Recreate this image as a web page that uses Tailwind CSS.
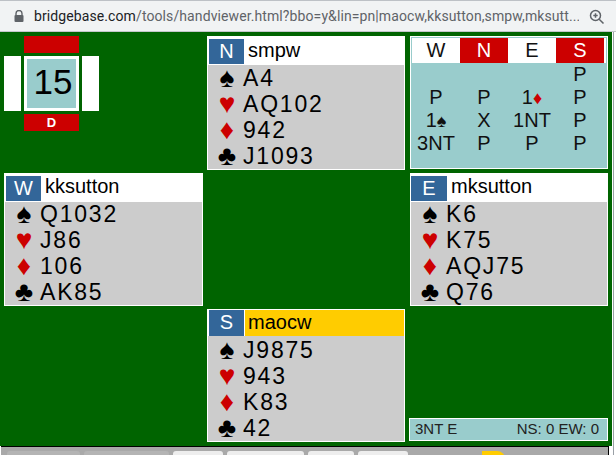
<!doctype html>
<html><head><meta charset="utf-8"><script src="https://cdn.jsdelivr.net/npm/@tailwindcss/browser@4"></script></head>
<body class="w-[616px] h-[455px] overflow-hidden bg-white font-['Liberation_Sans',sans-serif] text-black relative">
<div class="h-[32px] bg-[#f1f3f4] border-t border-b border-t-[#bdc1c6] border-b-[#c4c7cb] relative flex items-center pl-[14px] mt-0">
<svg width="10" height="12" viewBox="0 0 10 12" class="shrink-0"><path d="M2 5V3.5a3 3 0 0 1 6 0V5" fill="none" stroke="#5f6368" stroke-width="1.4"/><rect x="0.5" y="5" width="9" height="7" rx="1" fill="#5f6368"/></svg>
<div class="ml-[10px] w-[545px] whitespace-nowrap overflow-hidden text-[14px] leading-[18px] tracking-[0.1px] font-['Roboto',sans-serif] text-[#5f6368]"><span class="text-[#202124]">bridgebase.com</span>/tools/handviewer.html?bbo=y&amp;lin=pn|maocw,kksutton,smpw,mksutt...</div>
<svg width="16" height="16" viewBox="0 0 16 16" class="absolute left-[589px] top-[8px]"><circle cx="6.5" cy="6.5" r="5" fill="none" stroke="#5f6368" stroke-width="1.5"/><path d="M10.2 10.2 14.5 14.5M4.3 6.5h4.4M6.5 4.3v4.4" stroke="#5f6368" stroke-width="1.5" fill="none"/></svg>
</div>
<div class="h-[414px] w-[612px] bg-[#006400] pt-[4px] pl-[4px] grid grid-cols-[199px_198px_199px] grid-rows-[134px_133px_133px] gap-x-[4px] gap-y-[3px]">
<div class="relative">
 <div class="absolute left-[20px] top-0 w-[55px] h-[17px] bg-[#cc0000]"></div>
 <div class="absolute left-0 top-[20px] w-[17px] h-[55px] bg-white"></div>
 <div class="absolute left-[78px] top-[20px] w-[17px] h-[55px] bg-white"></div>
 <div class="absolute left-[20px] top-[20px] w-[55px] h-[55px] bg-[#99cccc] border-[3px] border-white flex items-center justify-center text-[35px] leading-none pb-[4px] pl-[3px]">15</div>
 <div class="absolute left-[20px] top-[78px] w-[55px] h-[17px] bg-[#cc0000] text-white font-bold text-[13px] leading-[17px] text-center">D</div>
</div>
<div class="flex flex-col border border-white bg-[#cccccc]"><div class="h-[28px] bg-white flex items-center pl-[1px] text-[20px]"><span class="w-[35px] h-[25px] bg-[#336699] text-white text-center leading-[25px]">N</span><span class="ml-[4px] -mt-[3px] text-black">smpw</span></div>
<div class="flex-1 text-[23px] leading-[26px] tracking-[1.8px] pl-[3px]">
<div class="flex"><span class="w-[32px] text-center text-[28px] tracking-normal">♠</span><span>A4</span></div><div class="flex"><span class="w-[32px] text-center text-[28px] tracking-normal text-[#cc0000]">♥</span><span>AQ102</span></div><div class="flex"><span class="w-[32px] text-center text-[28px] tracking-normal text-[#cc0000]">♦</span><span>942</span></div><div class="flex"><span class="w-[32px] text-center text-[28px] tracking-normal">♣</span><span>J1093</span></div></div></div>
<div class="ml-[1px] w-[198px] h-[133px] flex flex-col border border-white bg-[#99cccc] text-[20px] text-[#111]">
<div class="grid grid-cols-[48px_48px_48px_48px] h-[25px] leading-[25px] text-center mx-[1px] mt-[1px] bg-white"><span>W</span><span class="bg-[#cc0000] text-white">N</span><span>E</span><span class="bg-[#cc0000] text-white">S</span></div>
<div class="grid grid-cols-[48px_48px_48px_48px] auto-rows-[23px] leading-[23px] text-center mx-[1px]">
<span></span><span></span><span></span><span>P</span>
<span>P</span><span>P</span><span>1<span class="text-[#cc0000] text-[18px]">♦</span></span><span>P</span>
<span>1<span class="text-[18px]">♠</span></span><span>X</span><span>1NT</span><span>P</span>
<span>3NT</span><span>P</span><span>P</span><span>P</span></div></div>
<div class="flex flex-col border border-white bg-[#cccccc]"><div class="h-[28px] bg-white flex items-center pl-[1px] text-[20px]"><span class="w-[35px] h-[25px] bg-[#336699] text-white text-center leading-[25px]">W</span><span class="ml-[4px] -mt-[4px] text-black">kksutton</span></div>
<div class="flex-1 text-[23px] leading-[26px] tracking-[1.8px] pl-[3px] -mt-[1px]">
<div class="flex"><span class="w-[32px] text-center text-[28px] tracking-normal">♠</span><span>Q1032</span></div><div class="flex"><span class="w-[32px] text-center text-[28px] tracking-normal text-[#cc0000]">♥</span><span>J86</span></div><div class="flex"><span class="w-[32px] text-center text-[28px] tracking-normal text-[#cc0000]">♦</span><span>106</span></div><div class="flex"><span class="w-[32px] text-center text-[28px] tracking-normal">♣</span><span>AK85</span></div></div></div>
<div></div>
<div class="ml-[1px] w-[198px] flex flex-col border border-white bg-[#cccccc]"><div class="h-[28px] bg-white flex items-center pl-[0px] text-[20px]"><span class="w-[36px] h-[25px] bg-[#336699] text-white text-center leading-[25px]">E</span><span class="ml-[4px] -mt-[4px] text-black">mksutton</span></div>
<div class="flex-1 text-[23px] leading-[26px] tracking-[1.8px] pl-[3px] -mt-[1px]">
<div class="flex"><span class="w-[32px] text-center text-[28px] tracking-normal">♠</span><span>K6</span></div><div class="flex"><span class="w-[32px] text-center text-[28px] tracking-normal text-[#cc0000]">♥</span><span>K75</span></div><div class="flex"><span class="w-[32px] text-center text-[28px] tracking-normal text-[#cc0000]">♦</span><span>AQJ75</span></div><div class="flex"><span class="w-[32px] text-center text-[28px] tracking-normal">♣</span><span>Q76</span></div></div></div>
<div></div>
<div class="flex flex-col border border-white bg-[#cccccc]"><div class="h-[28px] bg-white flex items-center pl-[1px] text-[20px]"><span class="w-[35px] h-[26px] bg-[#336699] text-white text-center leading-[25px]">S</span><span class="ml-[1px] flex-1 h-[26px] bg-[#ffcc00] pl-[3px] leading-[25px] text-black">maocw</span></div>
<div class="flex-1 text-[23px] leading-[26px] tracking-[1.8px] pl-[3px] pt-[1px]">
<div class="flex"><span class="w-[32px] text-center text-[28px] tracking-normal">♠</span><span>J9875</span></div><div class="flex"><span class="w-[32px] text-center text-[28px] tracking-normal text-[#cc0000]">♥</span><span>943</span></div><div class="flex"><span class="w-[32px] text-center text-[28px] tracking-normal text-[#cc0000]">♦</span><span>K83</span></div><div class="flex"><span class="w-[32px] text-center text-[28px] tracking-normal">♣</span><span>42</span></div></div></div>
<div class="flex items-end pb-[1px]"><div class="w-[199px] h-[23px] bg-[#99cccc] border border-white flex items-center justify-between pl-[5px] pr-[8px] text-[15px] text-[#222]"><span>3NT E</span><span>NS: 0 EW: 0</span></div></div>
</div>
<div class="h-[9px] w-[608px] ml-[1px] bg-[#a9a9a9] border-t border-r border-black flex gap-[4px] pl-[6px] pt-[4px] overflow-hidden relative">
<div class="w-[73px] h-[8px] bg-[#b4b4b4] rounded-t-[3px]"></div><div class="w-[85px] h-[8px] bg-[#b4b4b4] rounded-t-[3px]"></div><div class="w-[50px] h-[8px] bg-[#eeeeee] rounded-t-[3px]"></div><div class="w-[77px] h-[8px] bg-[#eeeeee] rounded-t-[3px]"></div><div class="w-[46px] h-[8px] bg-[#eeeeee] rounded-t-[3px]"></div><div class="w-[50px] h-[8px] bg-[#eeeeee] rounded-t-[3px]"></div>
<div class="absolute left-[481px] top-[4px] w-[23px] h-[8px] bg-[#ffcc00] rounded-tr-[10px]"></div>
</div>
<div class="absolute left-[613px] top-[32px] w-[1px] h-[423px] bg-[#9aa0a6]"></div>
</body></html>
